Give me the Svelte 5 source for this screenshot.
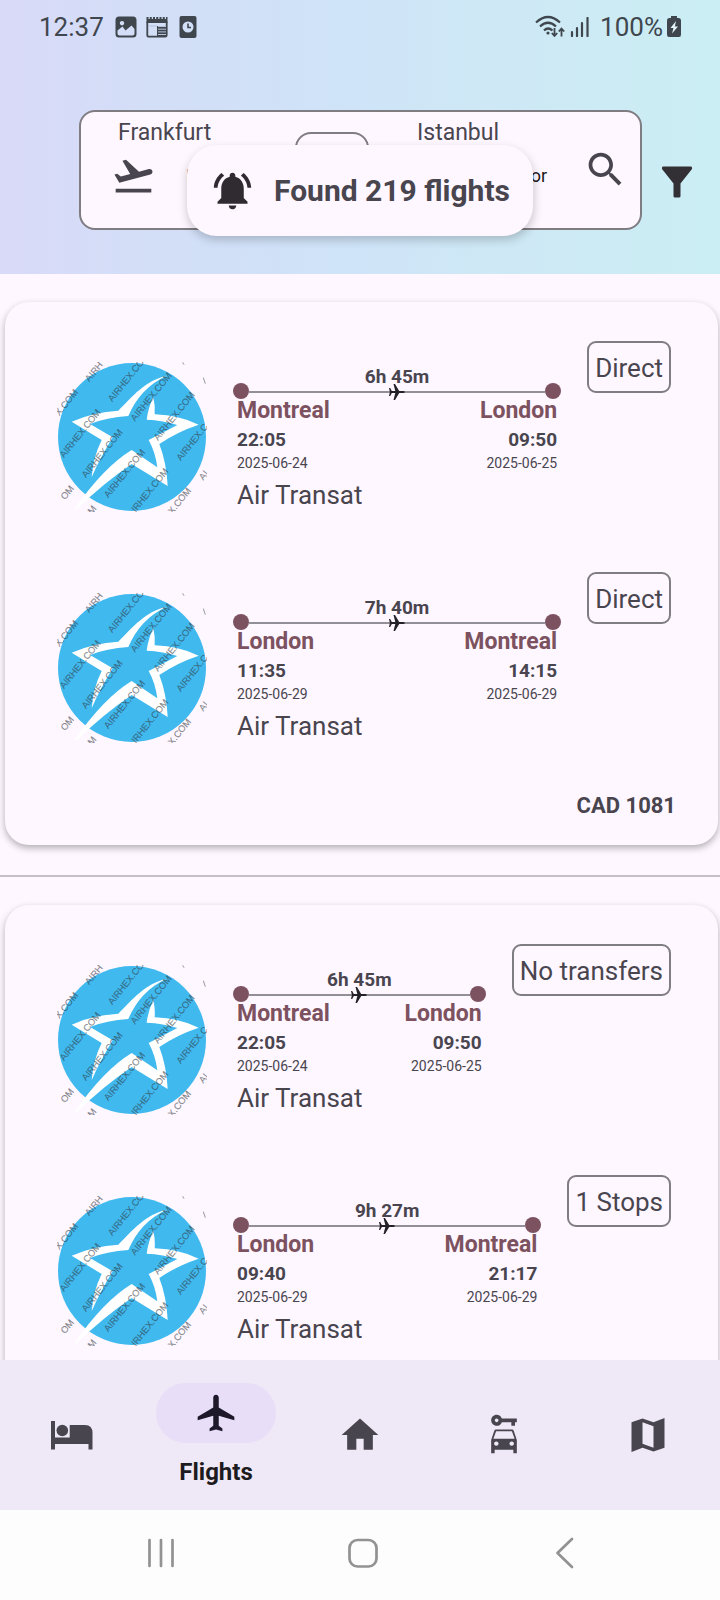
<script>
  const results = [
    {
      price: 'CAD 1081',
      legs: [
        { from: 'Montreal', to: 'London', dep: '22:05', arr: '09:50', depDate: '2025-06-24', arrDate: '2025-06-25', time: '6h 45m', stops: 'Direct' },
        { from: 'London', to: 'Montreal', dep: '11:35', arr: '14:15', depDate: '2025-06-29', arrDate: '2025-06-29', time: '7h 40m', stops: 'Direct' }
      ]
    },
    {
      price: '',
      legs: [
        { from: 'Montreal', to: 'London', dep: '22:05', arr: '09:50', depDate: '2025-06-24', arrDate: '2025-06-25', time: '6h 45m', stops: 'No transfers' },
        { from: 'London', to: 'Montreal', dep: '09:40', arr: '21:17', depDate: '2025-06-29', arrDate: '2025-06-29', time: '9h 27m', stops: '1 Stops' }
      ]
    }
  ];

  // Baseline start points of the repeated watermark on the airline logo
  const marks = [
    [148, 127, 'AIRH'], [217, 187, 'AIRHEX.CO'], [285, 245, 'AIRHEX.COM'],
    [354, 303, 'AIRHEX.COM'], [422, 364, 'AIRHEX.C'], [490, 422, 'AI'],
    [58, 229, 'X.COM'], [72, 355, 'AIRHEX.COM'], [138, 415, 'AIRHEX.COM'],
    [205, 475, 'AIRHEX.COM'], [287, 518, 'IRHEX.COM'], [397, 524, 'X.COM'],
    [75, 481, 'OM'], [156, 524, 'M']
  ];
</script>

<div class="screen">
  <header>
    <div class="status">
      <span>12:37</span>
      <svg width="22" height="22" viewBox="0 0 22 22"><path fill-rule="evenodd" d="M4 0.500H18Q21.500 0.500 21.500 4V18Q21.500 21.500 18 21.500H4Q0.500 21.500 0.500 18V4Q0.500 .5 4 .5ZM2.500 14.500L7.500 10.500 10.500 14.500 16.500 9.500 19.500 13V17.500Q19.500 19.500 17.500 19.500H4.500Q2.500 19.500 2.500 17.500ZM7 5A2.200 2.200 0 1 0 7.010 5Z" fill="currentColor" /></svg>
      <svg class="news" width="22" height="22" viewBox="0 0 22 22"><path d="M.5 2H21.500" stroke="currentColor" stroke-width="2" stroke-dasharray="2 1.250" /><path d="M.5 3H21.500V7H.5Z" fill="currentColor" /><rect x="1.300" y="5" width="19.400" height="15.700" rx="1.500" fill="none" stroke="currentColor" stroke-width="1.800" /><path d="M11 10H20V20H11Z" fill="currentColor" /><path d="M2 10H11M12 10.500H20M12 13.200H20M12 15.900H20M12 18.500H20" stroke="#b4c2dc" stroke-width="1" /></svg>
      <svg class="clock" width="18" height="22" viewBox="0 0 18 22"><rect x=".5" width="17" height="22" rx="2" fill="currentColor" /><circle cx="9" cy="11" r="5.500" fill="#d1e0f8" /><path d="M9 7.500V11.500H12" fill="none" stroke="currentColor" stroke-width="1.600" /></svg>
      <i class="fill"></i>
      <svg class="wifi" width="30" height="24" viewBox="0 0 30 24"><g fill="none" stroke="currentColor" stroke-width="2.200"><path d="M1 7.500Q13 -3.500 25 7.500M5 11.500Q13 4 21 11.500M9 15.500Q13 11.500 17.500 15.500" /><path d="M19.500 13V20.500M16.800 18L19.500 21 22.200 18M26.500 21.500V14M23.800 16.500L26.500 13.500 29.200 16.500" stroke-width="1.800" /></g><circle cx="13" cy="18" r="1.600" fill="currentColor" /></svg>
      <svg class="signal" width="20" height="20" viewBox="0 0 20 20"><path d="M2 15V19M7 11V19M12 6V19M17.500 1V19" stroke="currentColor" stroke-width="2.200" stroke-linecap="round" /></svg>
      <span>100%</span>
      <svg class="battery" width="14" height="22" viewBox="0 0 14 22"><path d="M4 0H10V2H12Q14 2 14 4.500V18.500Q14 21 12 21H2Q0 21 0 18.500V4.500Q0 2 2 2H4Z" fill="currentColor" /><path d="M9 5L3.500 12H6.500L5 17.500 11 10.500H7.800Z" fill="#e4f6fa" /></svg>
    </div>

    <div class="searchrow">
      <div class="search">
        <div class="place">
          <span class="name">Frankfurt</span>
          <div class="field">
            <svg width="45" height="45" viewBox="0 0 24 24" fill="currentColor"><path d="M2.500 19h19v2h-19zM22.070 9.640c-.21-.8-1.040-1.280-1.840-1.060L14.920 10l-6.900-6.430-1.930.51 4.140 7.170-4.970 1.330-1.970-1.540-1.450.39 2.590 4.490L21 11.490c.81-.23 1.280-1.050 1.070-1.850z" /></svg>
            <span>From</span>
          </div>
        </div>
        <div class="swap"></div>
        <div class="place end">
          <span class="name">Istanbul</span>
          <div class="field"><span>or</span></div>
        </div>
        <button class="find" aria-label="Search">
          <svg width="45" height="45" viewBox="0 0 24 24" fill="currentColor"><path d="M15.500 14h-.79l-.28-.27C15.410 12.590 16 11.110 16 9.500 16 5.910 13.090 3 9.500 3S3 5.910 3 9.500 5.910 16 9.500 16c1.610 0 3.090-.59 4.230-1.570l.27.28v.79l5 4.990L20.490 19l-4.990-5zm-6 0C7.010 14 5 11.990 5 9.500S7.010 5 9.500 5 14 7.010 14 9.500 11.990 14 9.500 14z" /></svg>
        </button>
      </div>
      <button class="filter" aria-label="Filter">
        <svg width="30" height="32" viewBox="0 0 30 32"><path d="M1.200 0.500H28.800Q30 .5 30 1.800V3L18.500 17.500V30Q18.500 31.500 17 31.500H13Q11.500 31.500 11.500 30V17.500L0 3V1.800Q0 .5 1.200 .5Z" fill="#333035" /></svg>
      </button>
    </div>

    <div class="toast" role="status">
      <svg width="45" height="45" viewBox="0 0 24 24" fill="#2f2b30"><path d="M7.580 4.080L6.150 2.650C3.750 4.480 2.170 7.300 2.030 10.500h2c.15-2.650 1.510-4.970 3.550-6.420zm12.390 6.420h2c-.15-3.200-1.730-6.020-4.120-7.850l-1.420 1.430c2.020 1.450 3.390 3.770 3.540 6.420zM18 11c0-3.070-1.640-5.640-4.500-6.320V4c0-.83-.67-1.500-1.500-1.500s-1.500.67-1.500 1.500v.68C7.630 5.360 6 7.920 6 11v5l-2 2v1h16v-1l-2-2v-5zm-6 11c.14 0 .27-.01.4-.04.65-.14 1.180-.58 1.440-1.180.1-.24.15-.5.15-.78h-4c.01 1.100.9 2 2.010 2z" /></svg>
      <span>Found 219 flights</span>
    </div>
  </header>

  <main>
    {#each results as result}
      <article>
        {#each result.legs as leg}
          <section class="leg">
            <svg class="logo" width="150" height="150" viewBox="51 66 450 450">
              <circle cx="276" cy="291" r="222" fill="#40b9ef" />
              <g fill="#fff">
                <path d="M380 107C318 120 276 170 235 212Q160 216 95 245L185 300Q160 350 155 412Q176 362 218 292L150 252Q200 232 265 228Q300 144 380 107Z" />
                <path d="M340 170Q346 198 344 223Q420 226 476 254Q410 276 358 312Q380 370 383 438L275 372Q190 430 110 508H103Q190 382 275 330L352 382Q346 336 326 300L412 255Q370 241 320 239Q324 205 340 170Z" />
              </g>
              <g font-family="'Liberation Sans', Arial, sans-serif" font-size="28" fill="#303840" fill-opacity=".55" stroke="#303840" stroke-opacity=".3" stroke-width="1">
                {#each marks as [x, y, word]}
                  <text transform="translate({x} {y}) rotate(-51)">{word}</text>
                {/each}
                <path d="M428 67l4 7M490 113l6 18" stroke-opacity=".5" stroke-width="3" />
              </g>
            </svg>
            <div class="route">
              <span class="duration">{leg.time}</span>
              <div class="track">
                <i class="dot"></i>
                <i class="line"></i>
                <svg width="16" height="16" viewBox="0 0 16 16"><path d="M0 4H1.200L2.800 6.900H6.300L4.500 0H6L10.200 6.900H14.500Q16 7.300 16 8Q16 8.700 14.500 9.100H10.200L6 16H4.500L6.300 9.100H2.800L1.200 12H0L.9 8Z" fill="#242126" /></svg>
                <i class="line"></i>
                <i class="dot"></i>
              </div>
              <div class="ends">
                <div>
                  <strong class="city">{leg.from}</strong>
                  <span class="time">{leg.dep}</span>
                  <span class="date">{leg.depDate}</span>
                </div>
                <div class="arrive">
                  <strong class="city">{leg.to}</strong>
                  <span class="time">{leg.arr}</span>
                  <span class="date">{leg.arrDate}</span>
                </div>
              </div>
              <span class="airline">Air Transat</span>
            </div>
            <span class="badge">{leg.stops}</span>
          </section>
        {/each}
        <p class="price">{result.price}</p>
      </article>
      <hr />
    {/each}
  </main>

  <nav class="tabs">
    <a href="#hotels" aria-label="Hotels">
      <svg width="42" height="44" viewBox="0 0 42 44" fill="currentColor"><path d="M0 8H4V24.500H18.700V12H34Q41.500 12 41.500 20V36.500H37.500V31H4V36.500H0Z" /><circle cx="11.300" cy="17.500" r="5.800" /></svg>
    </a>
    <a href="#flights" class="active" aria-current="page">
      <span class="pill">
        <svg width="44" height="44" viewBox="0 0 24 24" fill="currentColor"><path d="M22 16v-2l-8.500-5V3.500c0-.83-.67-1.500-1.500-1.500s-1.500.67-1.500 1.500V9L2 14v2l8.500-2.500V19L8.500 20.500V22l3.500-1 3.500 1v-1.500L13.500 19v-5.500L22 16z" /></svg>
      </span>
      <span class="label">Flights</span>
    </a>
    <a href="#home" aria-label="Home">
      <svg width="44" height="44" viewBox="0 0 24 24" fill="currentColor"><path d="M10 20v-6h4v6h5v-8h3L12 3 2 12h3v8z" /></svg>
    </a>
    <a href="#cars" aria-label="Car rental">
      <svg width="44" height="44" viewBox="0 0 24 24" fill="currentColor"><path d="M10.830 3C10.410 1.830 9.300 1 8 1 6.340 1 5 2.340 5 4s1.340 3 3 3c1.300 0 2.410-.84 2.830-2H16v2h2V5h1V3zM8 5c-.55 0-1-.45-1-1s.45-1 1-1 1 .45 1 1-.45 1-1 1z" /><path fill-rule="evenodd" d="M7.600 9H16.400Q17.100 9 17.300 9.700L19 14.700V22H17.100V20H6.900V22H5V14.700L6.700 9.700Q6.900 9 7.600 9ZM7.700 9.900L6.200 14H17.800L16.300 9.900ZM7.800 15.500A1.200 1.200 0 1 0 7.810 15.500ZM16.200 15.500A1.200 1.200 0 1 0 16.210 15.500Z" /></svg>
    </a>
    <a href="#map" aria-label="Map">
      <svg width="44" height="44" viewBox="0 0 24 24" fill="currentColor"><path d="M15 5.100L9 3 3 5.020v16.200l6-2.330 6 2.100 6-2.020V2.770L15 5.100zm0 13.790l-6-2.110V5.110l6 2.110v11.670z" /></svg>
    </a>
  </nav>

  <div class="system">
    <button aria-label="Recent apps"><svg width="30" height="32" viewBox="0 0 30 32"><path d="M3.500 3V29M15 3V29M26.500 3V29" /></svg></button>
    <button aria-label="Home screen"><svg width="30" height="32" viewBox="0 0 30 32"><rect x="1.500" y="3" width="27" height="26.500" rx="8" /></svg></button>
    <button aria-label="Back"><svg width="30" height="32" viewBox="0 0 30 32"><path d="M22 2L7.500 16 22 30" /></svg></button>
  </div>
</div>

<style>
  :global(body) {
    margin: 0;
    background: #fef7ff;
  }
  .screen {
    display: flex;
    flex-direction: column;
    height: 100vh;
    background: #fef7ff;
    color: #49454f;
    font-family: Roboto, sans-serif;
  }
  svg {
    display: block;
    flex: none;
  }
  button {
    padding: 0;
    border: 0;
    background: none;
    color: inherit;
  }
  header {
    position: relative;
    flex: none;
    padding-bottom: 44px;
    background: linear-gradient(90deg, #d9daf8 0%, #d3def7 20%, #cfe4f8 50%, #cee8f5 68%, #cbeef4 100%);
  }
  .status {
    display: flex;
    align-items: center;
    height: 54px;
    padding: 0 39px;
    color: #3f464e;
    font-size: 26px;
    line-height: 30px;
  }
  .status span + svg {
    margin-left: 11px;
  }
  .status .news {
    margin-left: 9px;
  }
  .status .clock {
    margin-left: 11px;
  }
  .fill {
    flex: 1;
  }
  .status .signal {
    margin: 0 10px 0 5px;
  }
  .status .battery {
    margin-left: 4px;
  }
  .searchrow {
    display: flex;
    align-items: center;
    gap: 20px;
    margin-top: 56px;
    padding: 0 28px 0 79px;
  }
  .search {
    display: flex;
    flex: 1;
    box-sizing: border-box;
    height: 120px;
    padding: 0 12px 0 30px;
    border: 2px solid #7f7c82;
    border-radius: 16px;
    background: #fef7ff;
  }
  .place {
    flex: 1;
    padding-top: 7px;
  }
  .name {
    display: block;
    padding-left: 7px;
    font-size: 23px;
    line-height: 28px;
  }
  .field {
    display: flex;
    align-items: center;
    gap: 30px;
    height: 45px;
    margin-top: 6px;
    font-size: 18px;
  }
  .field span {
    color: #1d1b20;
  }
  .end {
    margin-right: 30px;
  }
  .end .name {
    padding-left: 48px;
  }
  .end .field {
    justify-content: flex-end;
    padding-right: 6px;
  }
  .swap {
    box-sizing: border-box;
    width: 74px;
    height: 74px;
    margin-top: 20px;
    border: 2px solid #7f7c82;
    border-radius: 16px;
  }
  .find {
    align-self: flex-start;
    margin-top: 35px;
  }
  .filter {
    margin-top: 23px;
  }
  .toast {
    position: absolute;
    top: 145px;
    left: 50%;
    display: flex;
    align-items: center;
    gap: 19px;
    box-sizing: border-box;
    height: 91px;
    padding: 0 23px;
    border-radius: 30px;
    background: #fef7ff;
    box-shadow: 0 4px 10px rgba(0, 0, 0, 0.2);
    font-size: 30px;
    font-weight: 700;
    white-space: nowrap;
    transform: translateX(-50%);
  }
  main {
    flex: 1;
    min-height: 0;
    padding-top: 28px;
    overflow: hidden;
  }
  article {
    margin: 0 2px 0 5px;
    padding: 39px 42px 25px 52px;
    border-radius: 24px;
    background: #fef7ff;
    box-shadow: 0 3px 7px rgba(0, 0, 0, 0.3);
  }
  hr {
    height: 2px;
    margin: 30px 0 28px;
    border: 0;
    background: #c4bfc8;
  }
  .leg {
    display: flex;
    align-items: flex-start;
    gap: 26px;
    min-height: 171px;
    padding-right: 5px;
  }
  .leg + .leg {
    margin-top: 60px;
  }
  .logo {
    margin-top: 21px;
  }
  .route {
    flex: 1;
    padding-top: 24px;
  }
  .duration {
    display: block;
    margin-bottom: -6px;
    font-size: 19px;
    font-weight: 700;
    line-height: 24px;
    text-align: center;
  }
  .track {
    display: flex;
    align-items: center;
    height: 16px;
  }
  .dot {
    width: 16px;
    height: 16px;
    border-radius: 50%;
    background: #7d5260;
  }
  .line {
    flex: 1;
    height: 2px;
    margin: 2px -5px 0 0;
    background: #938f99;
  }
  .track svg {
    position: relative;
    margin-top: 2px;
  }
  svg + .line {
    margin: 2px 0 0 -5px;
  }
  .ends {
    display: flex;
    justify-content: space-between;
    padding: 0 4px;
  }
  .ends span,
  .ends strong {
    display: block;
  }
  .arrive {
    text-align: right;
  }
  .city {
    color: #7d5260;
    font-size: 23px;
    line-height: 24px;
  }
  .time {
    margin-top: 3px;
    font-size: 19px;
    font-weight: 700;
    line-height: 27px;
  }
  .date {
    font-size: 14px;
    line-height: 20px;
  }
  .airline {
    display: block;
    margin-top: 6px;
    padding-left: 4px;
    font-size: 26px;
    line-height: 32px;
  }
  .badge {
    box-sizing: border-box;
    height: 52px;
    padding: 0 6px;
    border: 2px solid #7f7c82;
    border-radius: 9px;
    font-size: 26px;
    line-height: 50px;
    white-space: nowrap;
  }
  .price {
    min-height: 28px;
    margin: 49px 0 0;
    font-size: 22px;
    font-weight: 700;
    line-height: 28px;
    text-align: right;
  }
  .tabs {
    display: grid;
    flex: none;
    grid-template-columns: repeat(5, 1fr);
    height: 150px;
    background: #efe8f6;
  }
  .tabs a {
    display: flex;
    flex-direction: column;
    align-items: center;
    justify-content: center;
    color: #49454f;
    text-decoration: none;
  }
  .tabs .active {
    justify-content: flex-start;
    padding-top: 23px;
    color: #1d192b;
  }
  .pill {
    display: flex;
    align-items: center;
    justify-content: center;
    width: 120px;
    height: 60px;
    border-radius: 30px;
    background: #e8def8;
  }
  .label {
    margin-top: 14px;
    color: #1d1b20;
    font-size: 24px;
    font-weight: 700;
    line-height: 30px;
  }
  .system {
    display: flex;
    flex: none;
    align-items: center;
    justify-content: space-between;
    box-sizing: border-box;
    height: 90px;
    padding: 0 140px 4px 146px;
    background: #fdfdfd;
  }
  .system svg {
    fill: none;
    stroke: #929292;
    stroke-width: 2.700;
    stroke-linecap: round;
    stroke-linejoin: round;
  }
</style>
